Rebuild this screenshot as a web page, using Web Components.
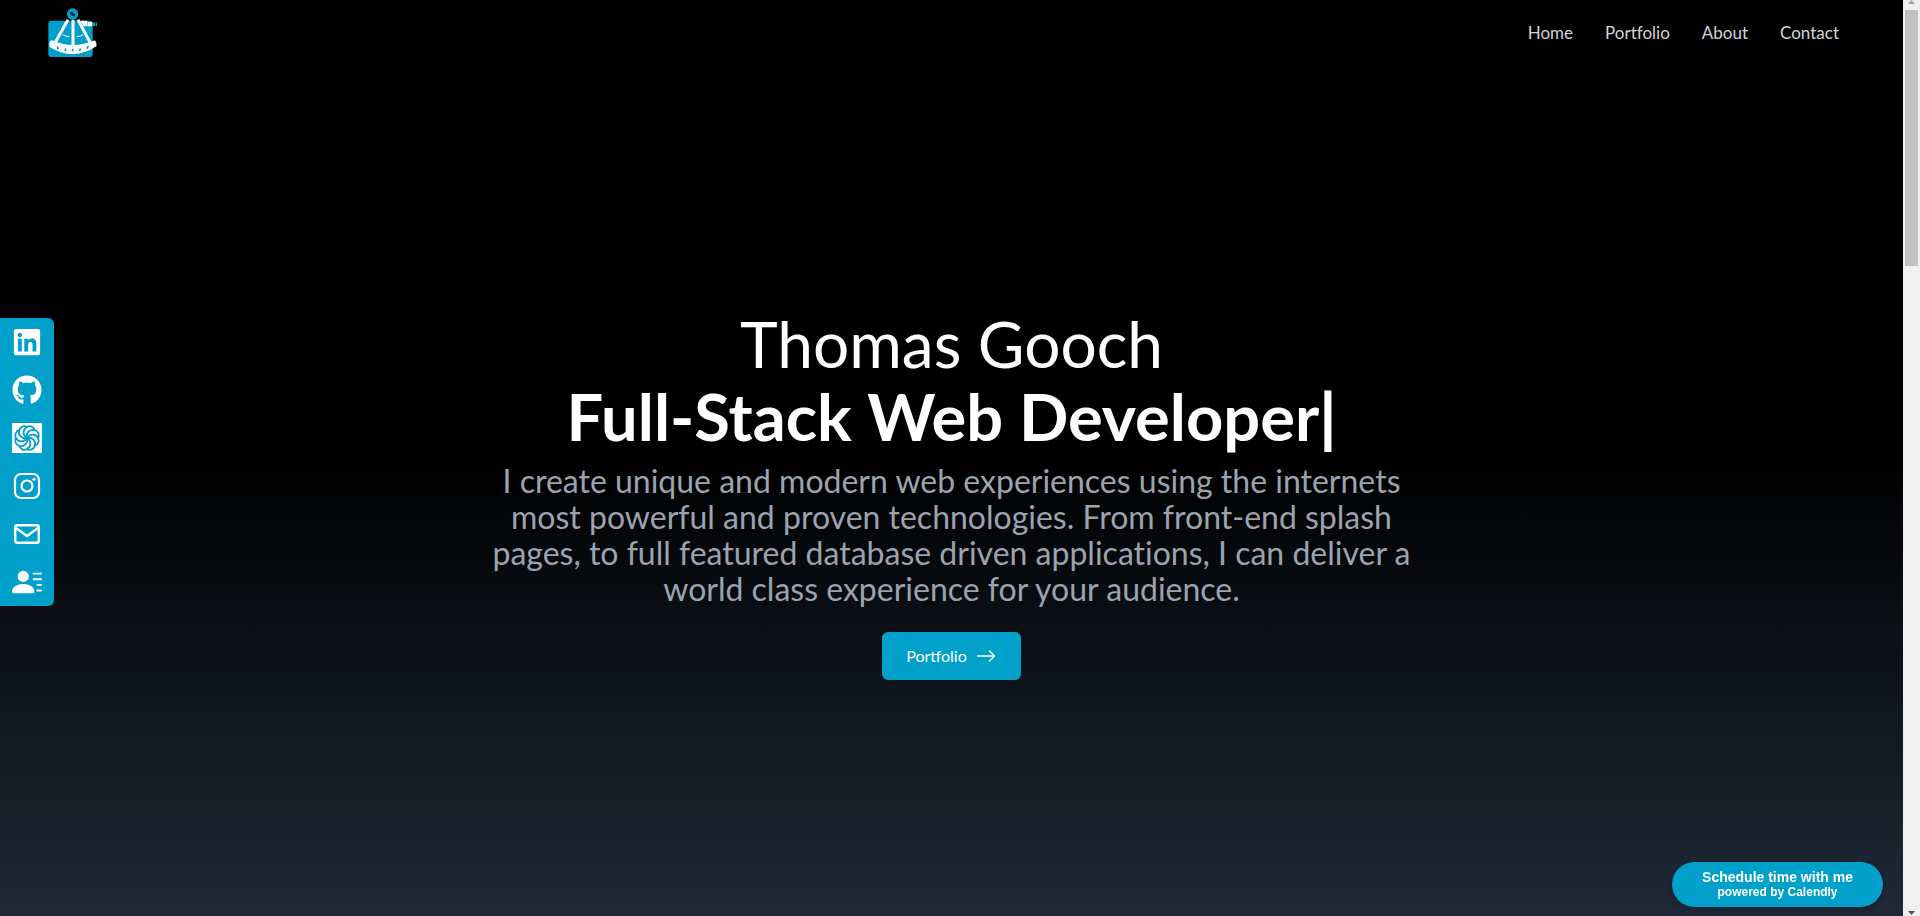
<!DOCTYPE html>
<html lang="en">
<head>
<meta charset="utf-8">
<meta name="viewport" content="width=device-width, initial-scale=1">
<title>Thomas Gooch | Full-Stack Web Developer</title>
<style>
  html, body { margin: 0; background: #000; }
  body { font-family: Lato, "Open Sans", sans-serif; font-variant-ligatures: none; color: #fff; --accent: #00a0cb; }
</style>
</head>
<body>
<portfolio-page>
  <site-header slot="header">
    <nav-link href="#home">Home</nav-link>
    <nav-link href="#portfolio">Portfolio</nav-link>
    <nav-link href="#about">About</nav-link>
    <nav-link href="#contact">Contact</nav-link>
  </site-header>
  <hero-section>
    <span slot="name">Thomas Gooch</span>
    <span slot="role">Full-Stack Web Developer</span>
    <span slot="intro">I create unique and modern web experiences using the internets most powerful and proven technologies. From front-end splash pages, to full featured database driven applications, I can deliver a world class experience for your audience.</span>
    <span slot="action">Portfolio</span>
  </hero-section>
  <social-bar slot="social"></social-bar>
  <calendly-badge slot="badge"></calendly-badge>
  <scroll-track slot="track"></scroll-track>
</portfolio-page>

<template id="portfolio-page">
  <style>
    :host { display: flex; min-height: 100vh; }
    .page { flex: 1; display: flex; flex-direction: column; background: linear-gradient(to bottom, #000, #000 50%, #1f2937); }
    main { flex: 1; display: flex; }
  </style>
  <div class="page">
    <slot name="header"></slot>
    <main><slot></slot></main>
  </div>
  <slot name="social"></slot>
  <slot name="badge"></slot>
  <slot name="track"></slot>
</template>

<template id="site-header">
  <style>
    :host { display: block; }
    header { display: flex; align-items: center; justify-content: space-between; height: 66px; padding: 0 64px 0 48px; }
    .logo { display: block; height: 50px; }
    nav { display: flex; gap: 32px; }
  </style>
  <header>
    <a class="logo" href="#home" aria-label="Home">
      <svg width="49" height="50" viewBox="22 25 147 150" aria-hidden="true">
        <rect x="23" y="63" width="133" height="109" rx="9" fill="#00a0cb"/>
        <path d="M82 60 44 128M112 60l36 68" stroke="#fff" stroke-width="9" fill="none"/>
        <path d="M97 60v78" stroke="#fff" stroke-width="9"/>
        <path d="M66 105q10 6 20 6M108 111q10 0 20-6" stroke="#fff" stroke-width="3" fill="none"/>
        <path d="M32 121q64 30 130 1 7 4 5 18-68 46-140 2-4-14 5-21z" fill="#fff"/>
        <path d="m50 141 3 8M74 146l1 8M96 147v8M119 146l-2 8M143 139l-4 8" stroke="#00a0cb" stroke-width="5" fill="none"/>
        <path d="M120 63h20v17h-12z" fill="#fff"/>
        <path d="M141 67h14v13h-14z" fill="#fff"/>
        <path d="M155 69h9v10h-9z" fill="#00a0cb"/><path d="M166 68h4v12h-4z" fill="#00a0cb"/>
        <circle cx="96" cy="43" r="17" fill="#00a0cb"/>
        <ellipse cx="96" cy="43" rx="9" ry="5" fill="#062b38" transform="rotate(28 96 43)"/>
      </svg>
    </a>
    <nav aria-label="Main"><slot></slot></nav>
  </header>
</template>

<template id="nav-link">
  <style>
    :host { display: block; }
    a { display: block; color: #d1d5db; font-size: 17px; line-height: 24px; text-decoration: none; }
    a:hover { color: #fff; }
  </style>
  <a><slot></slot></a>
</template>

<template id="hero-section">
  <style>
    :host { flex: 1; display: flex; flex-direction: column; align-items: center; justify-content: center; padding: 4px 64px 0; text-align: center; }
    h1 { margin: 0 0 11px; padding-top: 2px; font-size: 64px; line-height: 72px; font-weight: 400; }
    strong { display: block; font-size: 65px; font-weight: 700; }
    .cursor { font-weight: 900; }
    p { margin: 0 0 25px; max-width: 930px; color: #9ca3af; font-size: 32px; line-height: 36px; }
    button { display: flex; align-items: center; gap: 8px; height: 48px; padding: 0 24px; border: 0; border-radius: 6px; background: var(--accent); color: #fff; font-family: inherit; font-size: 16px; line-height: 24px; cursor: pointer; }
  </style>
  <h1><slot name="name"></slot><strong><slot name="role"></slot><span class="cursor">|</span></strong></h1>
  <p><slot name="intro"></slot></p>
  <button type="button"><slot name="action"></slot>
    <svg width="22" height="22" viewBox="0 0 22 22" fill="none" stroke="#fff" stroke-linecap="round" stroke-linejoin="round" stroke-width="1.4" aria-hidden="true"><path d="M2.500 11h17M14.500 6l5 5-5 5"/></svg>
  </button>
</template>

<template id="social-bar">
  <style>
    :host { position: fixed; left: 0; top: 50%; transform: translateY(-50%); padding-top: 8px; }
    ul { margin: 0; padding: 0; list-style: none; background: var(--accent); border-radius: 0 6px 6px 0; }
    a { display: flex; align-items: center; justify-content: center; width: 54px; height: 48px; color: #fff; }
  </style>
  <ul>
    <li><a href="#linkedin" aria-label="LinkedIn"><svg width="30" height="30" viewBox="-32 0 512 512" fill="currentColor"><path d="M416 32H31.900C14.300 32 0 46.500 0 64.300v383.400C0 465.500 14.300 480 31.900 480H416c17.600 0 32-14.500 32-32.300V64.300c0-17.800-14.400-32.300-32-32.300zM135.400 416H69V202.200h66.500V416zm-33.200-243c-21.300 0-38.500-17.300-38.500-38.500S80.900 96 102.200 96c21.200 0 38.500 17.300 38.500 38.500 0 21.300-17.200 38.500-38.500 38.500zm282.100 243h-66.400V312c0-24.800-.5-56.700-34.500-56.700-34.600 0-39.900 27-39.900 54.900V416h-66.400V202.200h63.700v29.200h.9c8.900-16.800 30.600-34.500 62.900-34.500 67.200 0 79.700 44.300 79.700 101.900V416z"/></svg></a></li>
    <li><a href="#github" aria-label="GitHub"><svg width="30" height="30" viewBox="-8 0 512 512" fill="currentColor"><path d="M165.900 397.400c0 2-2.300 3.600-5.200 3.600-3.300.3-5.600-1.300-5.600-3.600 0-2 2.300-3.600 5.200-3.600 3-.3 5.600 1.300 5.600 3.600zm-31.100-4.500c-.7 2 1.300 4.300 4.300 4.900 2.600 1 5.600 0 6.200-2s-1.300-4.300-4.300-5.200c-2.600-.7-5.500.3-6.200 2.300zm44.200-1.700c-2.900.7-4.900 2.600-4.600 4.900.3 2 2.900 3.300 5.900 2.600 2.900-.7 4.900-2.600 4.600-4.600-.3-1.900-3-3.200-5.900-2.900zM244.800 8C106.100 8 0 113.300 0 252c0 110.900 69.800 205.800 169.500 239.200 12.800 2.300 17.300-5.600 17.300-12.100 0-6.200-.3-40.400-.3-61.400 0 0-70 15-84.700-29.800 0 0-11.400-29.100-27.800-36.600 0 0-22.900-15.700 1.600-15.400 0 0 24.900 2 38.600 25.800 21.900 38.600 58.600 27.500 72.900 20.900 2.300-16 8.800-27.100 16-33.700-55.900-6.200-112.300-14.300-112.300-110.500 0-27.500 7.600-41.300 23.600-58.900-2.600-6.500-11.100-33.300 2.600-67.900 20.900-6.500 69 27 69 27 20-5.600 41.500-8.500 62.800-8.500s42.800 2.900 62.800 8.500c0 0 48.100-33.600 69-27 13.700 34.700 5.200 61.400 2.600 67.900 16 17.700 25.800 31.500 25.800 58.900 0 96.500-58.900 104.200-114.800 110.500 9.200 7.900 17 22.900 17 46.400 0 33.700-.3 75.400-.3 83.600 0 6.500 4.600 14.400 17.300 12.100C428.200 457.800 496 362.900 496 252 496 113.300 383.500 8 244.800 8z"/></svg></a></li>
    <li><a href="#codewars" aria-label="Codewars"><svg width="30" height="30" viewBox="0 0 30 30" fill="none" stroke="#00a0cb" stroke-width="1.8" stroke-linecap="round"><path d="M0 0h30v30H0z" fill="#fff" stroke="none"/>
      <g id="arms"></g></svg></a></li>
    <li><a href="#instagram" aria-label="Instagram"><svg width="30" height="30" viewBox="0 0 30 30" fill="none" stroke="currentColor" stroke-width="2.200"><rect x="3" y="3" width="24" height="24" rx="6"/><circle cx="15" cy="15" r="5.500"/><circle cx="22" cy="8.200" r="1.500" fill="currentColor" stroke="none"/></svg></a></li>
    <li><a href="#email" aria-label="Email"><svg width="30" height="30" viewBox="0 0 30 30" fill="none" stroke="currentColor" stroke-width="2.400" stroke-linejoin="round"><rect x="3.200" y="6.200" width="23.600" height="17.600" rx="2"/><path d="m4 9 11 8 11-8"/></svg></a></li>
    <li><a href="#resume" aria-label="Resume"><svg width="30" height="30" viewBox="0 0 16 16" fill="currentColor"><path d="M6 8a3 3 0 1 0 0-6 3 3 0 0 0 0 6zm-5 6s-1 0-1-1 1-4 6-4 6 3 6 4-1 1-1 1H1zM11 3.500a.5.5 0 0 1 .5-.5h4a.5.5 0 0 1 0 1h-4a.5.5 0 0 1-.5-.5zm.5 2.500a.5.5 0 0 0 0 1h4a.5.5 0 0 0 0-1h-4zm2 3a.5.5 0 0 0 0 1h2a.5.5 0 0 0 0-1h-2zm0 3a.5.5 0 0 0 0 1h2a.5.5 0 0 0 0-1h-2z"/></svg></a></li>
  </ul>
</template>

<template id="calendly-badge">
  <style>
    :host { position: fixed; right: 37px; bottom: 9px; }
    button { display: block; height: 45px; padding: 0 30px 2px; border: 0; border-radius: 25px; background: var(--accent); color: #fff; font: bold 14px/16px "Liberation Sans", Arial, sans-serif; box-shadow: 0 2px 5px rgba(0, 0, 0, .25); cursor: pointer; }
    small { display: block; font-size: 12px; line-height: 14px; }
  </style>
  <button type="button">Schedule time with me<small>powered by Calendly</small></button>
</template>

<template id="scroll-track">
  <style>
    :host { display: flex; flex-direction: column; align-items: center; justify-content: space-between; width: 17px; background: #f0f0f0; }
    .thumb { width: 13px; height: 28vh; margin-top: 6px; background: #c1c1c1; }
    .rest { flex: 1; }
    svg { display: block; }
  </style>
  <svg width="7" height="4" viewBox="0 0 7 4"><path d="M0 4h7L3.500 0z" fill="#a3a3a3"/></svg>
  <div class="thumb"></div>
  <div class="rest"></div>
  <svg width="7" height="5" viewBox="0 0 7 5"><path d="M0 0h7L3.500 4z" fill="#505050"/></svg>
</template>

<script>
  class TemplateElement extends HTMLElement {
    constructor() {
      super();
      const template = document.getElementById(this.localName);
      this.attachShadow({ mode: 'open' }).append(template.content.cloneNode(true));
    }
  }
  class NavLink extends TemplateElement {
    connectedCallback() {
      this.shadowRoot.querySelector('a').href = this.getAttribute('href');
    }
  }
  class SocialBar extends TemplateElement {
    connectedCallback() {
      const arms = this.shadowRoot.getElementById('arms');
      for (let i = 0; i < 8; i++) {
        const arm = document.createElementNS('http://www.w3.org/2000/svg', 'path');
        arm.setAttribute('d', 'M15 15C10 12 11 6 15 4C18 2 22 4 22.800 7.200');
        arm.setAttribute('transform', `rotate(${i * 45} 15 15)`);
        arms.append(arm);
      }
    }
  }
  for (const name of ['portfolio-page', 'site-header', 'hero-section', 'calendly-badge', 'scroll-track'])
    customElements.define(name, class extends TemplateElement {});
  customElements.define('nav-link', NavLink);
  customElements.define('social-bar', SocialBar);
</script>
</body>
</html>
